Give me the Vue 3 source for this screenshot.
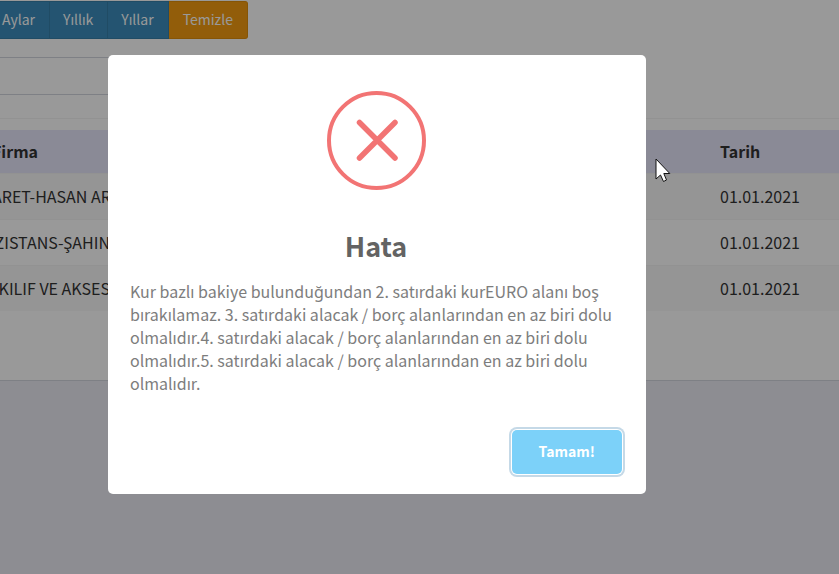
<script setup>
const ranges = ['Aylar', 'Yıllık', 'Yıllar']
const rows = [
  { firma: 'ARET-HASAN AR', tarih: '01.01.2021' },
  { firma: 'ZISTANS-ŞAHIN', tarih: '01.01.2021' },
  { firma: 'KILIF VE AKSES', tarih: '01.01.2021' },
]
</script>

<template>
  <div class="page">
    <main class="box">
      <div class="toolbar">
        <button v-for="r in ranges" :key="r" type="button" class="btn">{{ r }}</button>
        <button type="button" class="btn clear">Temizle</button>
      </div>
      <input class="search" type="text" aria-label="Ara" />
      <div class="results">
        <table>
          <thead>
            <tr><th class="firma">Firma</th><th>Tarih</th></tr>
          </thead>
          <tbody>
            <tr v-for="row in rows" :key="row.firma">
              <td class="firma"><span>{{ row.firma }}</span></td>
              <td>{{ row.tarih }}</td>
            </tr>
          </tbody>
        </table>
      </div>
    </main>

    <div class="overlay">
      <div class="modal" role="alertdialog" aria-modal="true" aria-labelledby="title" aria-describedby="message">
        <svg class="icon" viewBox="0 0 99 99" aria-hidden="true">
          <circle cx="49.500" cy="49.500" r="47.500" />
          <path d="M32.500 31.500L68 67M68 31.500L32.500 67" />
        </svg>
        <h2 id="title">Hata</h2>
        <p id="message">Kur bazlı bakiye bulunduğundan 2. satırdaki kurEURO alanı boş bırakılamaz. 3. satırdaki alacak / borç alanlarından en az biri dolu olmalıdır.4. satırdaki alacak / borç alanlarından en az biri dolu olmalıdır.5. satırdaki alacak / borç alanlarından en az biri dolu olmalıdır.</p>
        <div class="footer"><button type="button" class="confirm">Tamam!</button></div>
      </div>
    </div>

    <svg class="cursor" viewBox="0 0 16 25" aria-hidden="true">
      <path d="M1 1V21L5.500 17L8.500 23.500L11.500 22L8.800 15.500H14.800Z" />
    </svg>
  </div>
</template>

<style>
body {
  background: #ebecf3;
}
</style>

<style scoped>
.page,
.page button,
.page input {
  font-family: "Noto Sans CJK SC", "Noto Sans", sans-serif;
}

.page {
  min-height: 100vh;
  overflow: hidden;
  color: #333;
  font-size: 16px;
  line-height: 24px;
}

.box {
  box-sizing: border-box;
  min-height: 381px;
  padding-top: 1px;
  background: #fff;
  border-bottom: 1px solid #d2d6de;
}

.toolbar {
  display: flex;
  margin-left: -11px;
}

.btn {
  box-sizing: border-box;
  height: 38px;
  padding: 0 14px 2px 13px;
  border: 1px solid #367fa9;
  border-left-width: 0;
  background: #3c8dbc;
  color: #fff;
  font-size: 14px;
  line-height: 24px;
}

.btn.clear {
  padding: 0 14px 2px;
  border-color: #e08e0b;
  border-radius: 0 3px 3px 0;
  background: #f39c12;
}

.search {
  display: block;
  box-sizing: border-box;
  width: 50%;
  height: 38px;
  margin-top: 18px;
  border: solid #d2d6de;
  border-width: 1px 0;
  border-radius: 0;
}

.results {
  margin-top: 23px;
  padding-top: 11px;
  border-top: 1px solid #f4f4f4;
}

table {
  width: calc(100% + 16px);
  margin-left: -16px;
  border-collapse: collapse;
  table-layout: fixed;
}

th,
td {
  padding: 10px 8px 11px;
  text-align: left;
}

th {
  padding: 9px 8px 10px;
  background: #e6e6fa;
}

td {
  border-top: 1px solid #f4f4f4;
}

tbody tr:nth-child(odd) {
  background: #f9f9f9;
}

.firma {
  width: 712px;
}

.firma span {
  display: block;
  width: 118px;
  direction: rtl;
  white-space: nowrap;
  unicode-bidi: plaintext;
  text-align: right;
}

.overlay {
  position: fixed;
  inset: 0;
  display: flex;
  align-items: center;
  justify-content: center;
  padding: 0 85px 25px 0;
  background: rgba(0, 0, 0, 0.4);
}

.modal {
  box-sizing: border-box;
  width: 538px;
  padding: 36px 24px 20px 22px;
  border-radius: 5px;
  background: #fff;
}

.icon {
  display: block;
  width: 99px;
  height: 99px;
  margin: 0 auto;
  fill: none;
  stroke: #f27474;
  stroke-width: 4;
}

.icon path {
  stroke-width: 5.5;
  stroke-linecap: round;
}

h2 {
  margin: 37px 0 15px;
  color: #636363;
  font-size: 27px;
  line-height: 38px;
  text-align: center;
}

p {
  margin: 0;
  color: #7d7d7d;
  font-size: 16px;
  line-height: 23px;
}

.footer {
  display: flex;
  justify-content: flex-end;
  margin-top: 35px;
}

.confirm {
  height: 44px;
  padding: 0 27px 2px;
  border: 0;
  border-radius: 5px;
  background: #7cd1f9;
  box-shadow: 0 0 0 1px #fff, 0 0 0 3px #c5d9e7;
  color: #fff;
  font-size: 14px;
  font-weight: 700;
}

.cursor {
  position: fixed;
  top: 158px;
  left: 655px;
  width: 16px;
  height: 25px;
  fill: #fff;
  stroke: #111;
  stroke-width: 1;
}
</style>
